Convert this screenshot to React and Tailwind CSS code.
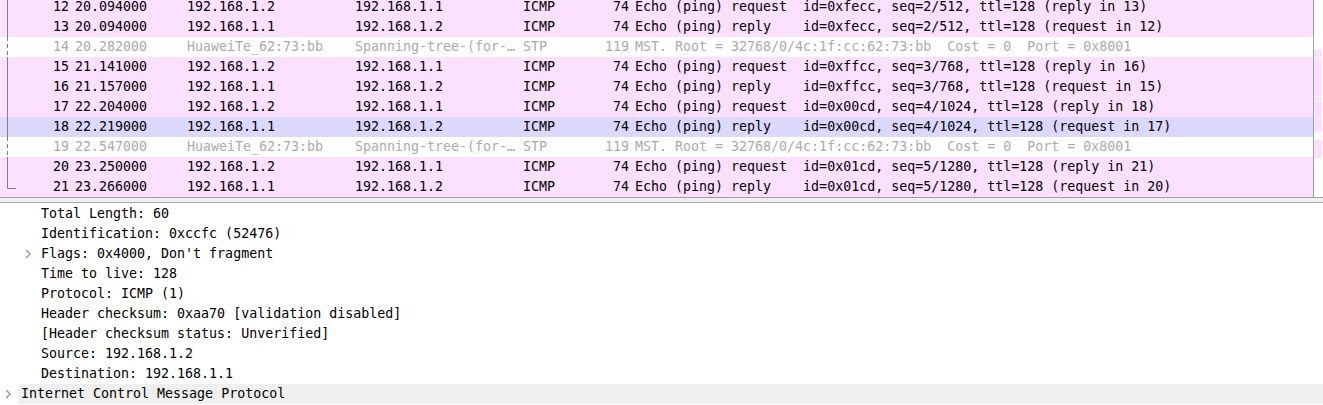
import React from 'react';

const packets = [
  { no: 12, time: '20.094000', src: '192.168.1.2', dst: '192.168.1.1', proto: 'ICMP', len: 74, info: 'Echo (ping) request  id=0xfecc, seq=2/512, ttl=128 (reply in 13)' },
  { no: 13, time: '20.094000', src: '192.168.1.1', dst: '192.168.1.2', proto: 'ICMP', len: 74, info: 'Echo (ping) reply    id=0xfecc, seq=2/512, ttl=128 (request in 12)' },
  { no: 14, time: '20.282000', src: 'HuaweiTe_62:73:bb', dst: 'Spanning-tree-(for-…', proto: 'STP', len: 119, info: 'MST. Root = 32768/0/4c:1f:cc:62:73:bb  Cost = 0  Port = 0x8001', stp: true },
  { no: 15, time: '21.141000', src: '192.168.1.2', dst: '192.168.1.1', proto: 'ICMP', len: 74, info: 'Echo (ping) request  id=0xffcc, seq=3/768, ttl=128 (reply in 16)' },
  { no: 16, time: '21.157000', src: '192.168.1.1', dst: '192.168.1.2', proto: 'ICMP', len: 74, info: 'Echo (ping) reply    id=0xffcc, seq=3/768, ttl=128 (request in 15)' },
  { no: 17, time: '22.204000', src: '192.168.1.2', dst: '192.168.1.1', proto: 'ICMP', len: 74, info: 'Echo (ping) request  id=0x00cd, seq=4/1024, ttl=128 (reply in 18)' },
  { no: 18, time: '22.219000', src: '192.168.1.1', dst: '192.168.1.2', proto: 'ICMP', len: 74, info: 'Echo (ping) reply    id=0x00cd, seq=4/1024, ttl=128 (request in 17)', hover: true },
  { no: 19, time: '22.547000', src: 'HuaweiTe_62:73:bb', dst: 'Spanning-tree-(for-…', proto: 'STP', len: 119, info: 'MST. Root = 32768/0/4c:1f:cc:62:73:bb  Cost = 0  Port = 0x8001', stp: true },
  { no: 20, time: '23.250000', src: '192.168.1.2', dst: '192.168.1.1', proto: 'ICMP', len: 74, info: 'Echo (ping) request  id=0x01cd, seq=5/1280, ttl=128 (reply in 21)' },
  { no: 21, time: '23.266000', src: '192.168.1.1', dst: '192.168.1.2', proto: 'ICMP', len: 74, info: 'Echo (ping) reply    id=0x01cd, seq=5/1280, ttl=128 (request in 20)', last: true },
];

const details = [
  { text: 'Total Length: 60', depth: 1 },
  { text: 'Identification: 0xccfc (52476)', depth: 1 },
  { text: "Flags: 0x4000, Don't fragment", depth: 1, expandable: true },
  { text: 'Time to live: 128', depth: 1 },
  { text: 'Protocol: ICMP (1)', depth: 1 },
  { text: 'Header checksum: 0xaa70 [validation disabled]', depth: 1 },
  { text: '[Header checksum status: Unverified]', depth: 1 },
  { text: 'Source: 192.168.1.2', depth: 1 },
  { text: 'Destination: 192.168.1.1', depth: 1 },
  { text: 'Internet Control Message Protocol', depth: 0, expandable: true, shaded: true },
];

// minimap strips on the right of the packet list
const minimap = [
  { h: 50, c: 'bg-white' },
  { h: 7, c: 'bg-[#fce0ff]' },
  { h: 2, c: 'bg-[#fdf0ff]' },
  { h: 37, c: 'bg-[#fce0ff]' },
  { h: 1, c: 'bg-white' },
  { h: 35, c: 'bg-[#fce0ff]' },
  { h: 8, c: 'bg-white' },
  { h: 18, c: 'bg-[#fce0ff]' },
  { h: 39, c: 'bg-white' },
];

const Bracket = ({ dashed, last }) => (
  <svg width="16" height="20" className="shrink-0">
    {last ? (
      <path d="M7.5 0 V11.5 H16" stroke="#808080" strokeWidth="1" fill="none" />
    ) : (
      <line x1="7.5" y1="0" x2="7.5" y2="20" stroke="#808080" strokeWidth="1" strokeDasharray={dashed ? '4 3' : undefined} />
    )}
  </svg>
);

const Chevron = () => (
  <svg width="7" height="10" viewBox="0 0 7 10" className="ml-[5px]">
    <path d="M1.2 1 L5 5 L1.2 9" stroke="#999999" strokeWidth="1.4" fill="none" />
  </svg>
);

export default function App() {
  return (
    <div className="w-[1323px] h-[405px] overflow-hidden bg-white text-[13.3px] leading-[20px] text-black" style={{ fontFamily: '"DejaVu Sans Mono", "Liberation Mono", monospace' }}>
      {/* packet list */}
      <div className="flex h-[198px] border-b border-[#a0a0a0]">
        <div className="flex flex-col justify-end w-[1314px] overflow-hidden border-r border-[#a0a0a0]">
          {packets.map((p) => (
            <div
              key={p.no}
              className={`flex shrink-0 h-[20px] whitespace-pre ${p.stp ? 'bg-white text-[#ababab]' : p.hover ? 'bg-[#dcd8fc]' : 'bg-[#fce0ff]'}`}
            >
              <Bracket dashed={p.stp} last={p.last} />
              <div className="w-[53px] text-right">{p.no}</div>
              <div className="w-[118px] pl-[6px]">{p.time}</div>
              <div className="w-[168px]">{p.src}</div>
              <div className="w-[168px]">{p.dst}</div>
              <div className="w-[52px]">{p.proto}</div>
              <div className="w-[54px] text-right">{p.len}</div>
              <div className="pl-[6px]">{p.info}</div>
            </div>
          ))}
        </div>
        <div className="flex flex-col w-[8px]">
          {minimap.map((m, i) => (
            <div key={i} className={m.c} style={{ height: m.h }} />
          ))}
        </div>
      </div>

      {/* splitter */}
      <div className="h-[4px] bg-[#f0f0f0] border-b border-[#a8a8a8] box-content" />

      {/* packet details */}
      <div className="flex flex-col pt-[1px]">
        {details.map((d, i) => (
          <div key={i} className="flex h-[20px] items-center">
            {d.depth === 1 && <div className="w-[20px] shrink-0" />}
            <div className="w-[18px] shrink-0 flex items-center">{d.expandable && <Chevron />}</div>
            <div className={`flex-1 h-[20px] pl-[3px] whitespace-pre ${d.shaded ? 'bg-[#efefef]' : ''}`}>{d.text}</div>
          </div>
        ))}
      </div>
    </div>
  );
}
